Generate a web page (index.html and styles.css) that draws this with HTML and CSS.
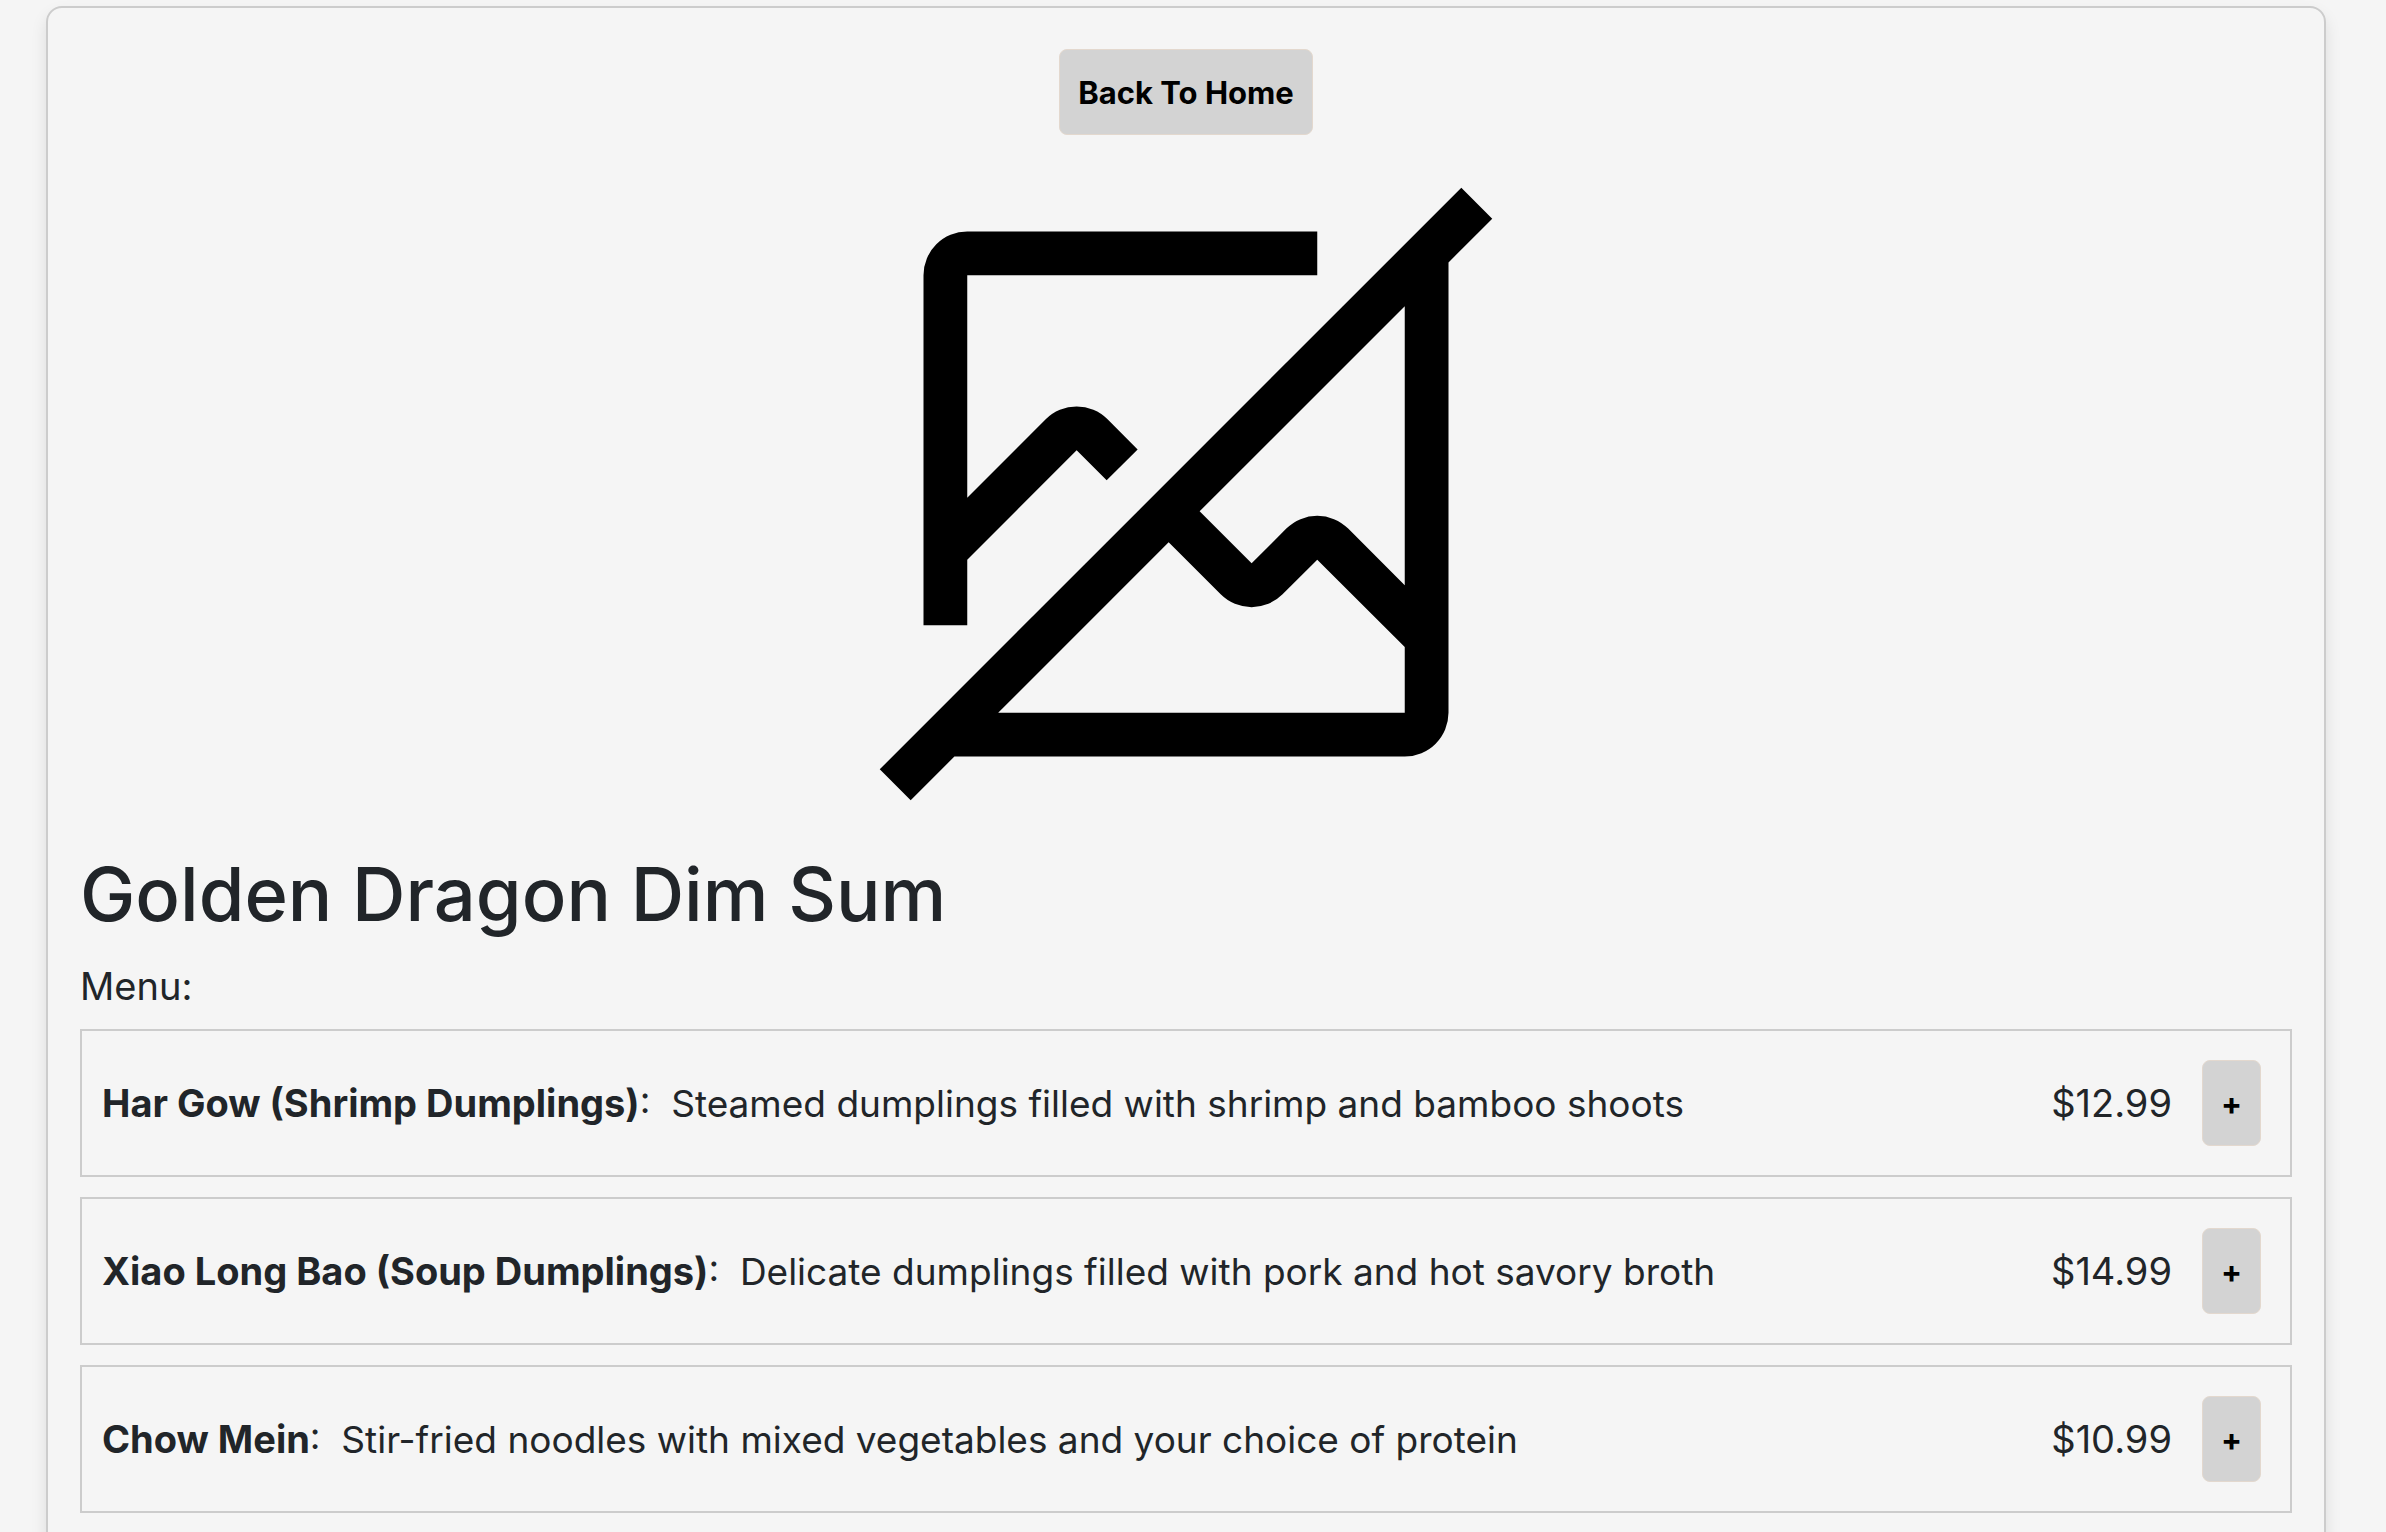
FILE: index.html
```html
<!DOCTYPE html>
<html lang="en">
<head>
  <meta charset="utf-8">
  <meta name="viewport" content="width=device-width, initial-scale=1">
  <title>Golden Dragon Dim Sum</title>
  <link rel="stylesheet" href="styles.css">
</head>
<body>
  <main class="card">
    <div class="card-top">
      <button type="button" class="button">Back To Home</button>
      <svg class="no-image" viewBox="0 0 32 32" role="img" aria-label="No image available">
        <path d="M30 3.4141 28.5859 2 2 28.5859 3.4141 30l2-2H26a2.0027 2.0027 0 0 0 2-2V5.4141zM26 26H7.4141l7.7929-7.793 2.3788 2.3787a2 2 0 0 0 2.8284 0L22 19l4 3.9973zm0-5.8318-2.5858-2.5859a2 2 0 0 0-2.8284 0L19 19.1682l-2.377-2.3771L26 7.4141z"/>
        <path d="M6 22v-3l5-4.9966 1.3733 1.3733 1.4159-1.416-1.375-1.375a2 2 0 0 0-2.8284 0L6 16.1716V6h16V4H6a2.002 2.002 0 0 0-2 2v16z"/>
      </svg>
    </div>
    <h1 class="title">Golden Dragon Dim Sum</h1>
    <p class="menu-label">Menu:</p>
    <ul class="menu">
      <li class="item">
        <p class="description"><strong class="name">Har Gow (Shrimp Dumplings)</strong>:&nbsp; Steamed dumplings filled with shrimp and bamboo shoots</p>
        <span class="price">$12.99</span>
        <button type="button" class="button" aria-label="Add Har Gow">+</button>
      </li>
      <li class="item">
        <p class="description"><strong class="name">Xiao Long Bao (Soup Dumplings)</strong>:&nbsp; Delicate dumplings filled with pork and hot savory broth</p>
        <span class="price">$14.99</span>
        <button type="button" class="button" aria-label="Add Xiao Long Bao">+</button>
      </li>
      <li class="item">
        <p class="description"><strong class="name">Chow Mein</strong>:&nbsp; Stir-fried noodles with mixed vegetables and your choice of protein</p>
        <span class="price">$10.99</span>
        <button type="button" class="button" aria-label="Add Chow Mein">+</button>
      </li>
    </ul>
  </main>
</body>
</html>
```
FILE: styles.css
```css
* {
  box-sizing: border-box;
}

html {
  scrollbar-width: none;
}

body {
  height: 100vh;
  margin: 0;
  padding: 6px 60px 0 46px;
  overflow: hidden;
  background: #f5f5f5;
  color: #212529;
  font-family: Inter, "Liberation Sans", sans-serif;
  font-size: 38px;
  line-height: 60px;
}

.card {
  padding: 41px 32px 32px;
  border: 2px solid #ccc;
  border-radius: 16px;
  box-shadow: 0 8px 16px rgba(0, 0, 0, 0.1);
}

.card-top {
  display: flex;
  flex-direction: column;
  align-items: center;
  gap: 9px;
}

.button {
  padding: 19px 18px 17px;
  border: 1px solid #e3d8ce;
  border-radius: 8px;
  background: #d3d3d3;
  color: #000;
  font-family: inherit;
  font-size: 31px;
  font-weight: 700;
  line-height: 48px;
}

.no-image {
  width: 700px;
  max-width: 100%;
}

.title {
  margin: 2px 0 14px;
  font-size: 74px;
  font-weight: 500;
  line-height: 96px;
}

.menu-label {
  margin: 0 0 13px;
}

.menu {
  display: flex;
  flex-direction: column;
  gap: 20px;
  margin: 0;
  padding: 0;
  list-style: none;
}

.item {
  display: flex;
  align-items: center;
  gap: 30px;
  padding: 29px 29px 29px 20px;
  border: 2px solid #ccc;
}

.description {
  flex: 1;
  margin: 0;
  font-size: 37px;
}

.name {
  font-size: 38px;
}
```
